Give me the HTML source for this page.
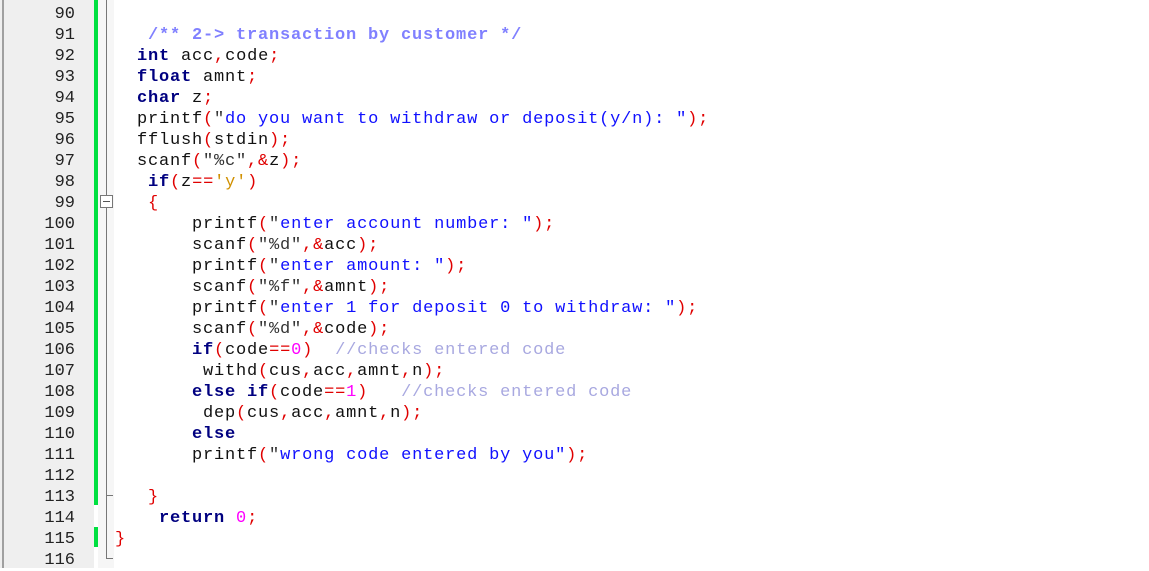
<!DOCTYPE html>
<html><head><meta charset="utf-8"><style>
html,body{margin:0;padding:0;width:1149px;height:568px;overflow:hidden;background:#fff;}
#gut{position:absolute;left:0;top:0;width:94px;height:568px;background:#efefef;}
#gb{position:absolute;left:2px;top:0;width:2px;height:568px;background:#a0a0a0;}
#fold{position:absolute;left:98px;top:0;width:16px;height:568px;background:#f6f6f6;}
.g{position:absolute;left:94px;width:4px;background:#00e040;}
#t{position:absolute;left:0;top:2px;width:1149px;height:568px;}
.num{position:absolute;left:0;width:75px;text-align:right;font:17px "Liberation Mono",monospace;letter-spacing:0px;color:#222;line-height:21px;}
.ln{position:absolute;left:115px;font:17px "Liberation Mono",monospace;letter-spacing:0.8px;line-height:21px;white-space:pre;color:#111;}
.k{color:#000080;font-weight:bold}
.p{color:#e00000}
.s{color:#1010ff}
.n{color:#ff00ff}
.c{color:#8080ff;font-weight:bold}
.cm{color:#a8a8e0}
.ch{color:#d09000}
.q{color:#333}
</style></head><body>
<div id="gut"></div><div id="gb"></div><div id="fold"></div>
<div class="g" style="top:0;height:505px"></div>
<div class="g" style="top:527px;height:20px"></div>
<div style="position:absolute;left:106px;top:0;width:1px;height:195px;background:#777"></div>
<div style="position:absolute;left:100px;top:195px;width:11px;height:11px;border:1px solid #777;background:#fff"></div>
<div style="position:absolute;left:103px;top:201px;width:7px;height:1px;background:#555"></div>
<div style="position:absolute;left:106px;top:208px;width:1px;height:350px;background:#777"></div>
<div style="position:absolute;left:106px;top:495px;width:7px;height:1px;background:#777"></div>
<div style="position:absolute;left:106px;top:558px;width:7px;height:1px;background:#777"></div>
<div id="t">
<div class="num" style="top:2px">90</div>
<div class="num" style="top:23px">91</div>
<div class="num" style="top:44px">92</div>
<div class="num" style="top:65px">93</div>
<div class="num" style="top:86px">94</div>
<div class="num" style="top:107px">95</div>
<div class="num" style="top:128px">96</div>
<div class="num" style="top:149px">97</div>
<div class="num" style="top:170px">98</div>
<div class="num" style="top:191px">99</div>
<div class="num" style="top:212px">100</div>
<div class="num" style="top:233px">101</div>
<div class="num" style="top:254px">102</div>
<div class="num" style="top:275px">103</div>
<div class="num" style="top:296px">104</div>
<div class="num" style="top:317px">105</div>
<div class="num" style="top:338px">106</div>
<div class="num" style="top:359px">107</div>
<div class="num" style="top:380px">108</div>
<div class="num" style="top:401px">109</div>
<div class="num" style="top:422px">110</div>
<div class="num" style="top:443px">111</div>
<div class="num" style="top:464px">112</div>
<div class="num" style="top:485px">113</div>
<div class="num" style="top:506px">114</div>
<div class="num" style="top:527px">115</div>
<div class="num" style="top:548px">116</div>

<div class="ln" style="top:23px">   <span class="c">/** 2-&gt; transaction by customer */</span></div>
<div class="ln" style="top:44px">  <span class="k">int</span> acc<span class="p">,</span>code<span class="p">;</span></div>
<div class="ln" style="top:65px">  <span class="k">float</span> amnt<span class="p">;</span></div>
<div class="ln" style="top:86px">  <span class="k">char</span> z<span class="p">;</span></div>
<div class="ln" style="top:107px">  printf<span class="p">(</span><span class="q">"</span><span class="s">do you want to withdraw or deposit(y/n): "</span><span class="p">);</span></div>
<div class="ln" style="top:128px">  fflush<span class="p">(</span>stdin<span class="p">);</span></div>
<div class="ln" style="top:149px">  scanf<span class="p">(</span><span class="q">"%c"</span><span class="p">,&amp;</span>z<span class="p">);</span></div>
<div class="ln" style="top:170px">   <span class="k">if</span><span class="p">(</span>z<span class="p">==</span><span class="ch">'y'</span><span class="p">)</span></div>
<div class="ln" style="top:191px">   <span class="p">{</span></div>
<div class="ln" style="top:212px">       printf<span class="p">(</span><span class="q">"</span><span class="s">enter account number: "</span><span class="p">);</span></div>
<div class="ln" style="top:233px">       scanf<span class="p">(</span><span class="q">"%d"</span><span class="p">,&amp;</span>acc<span class="p">);</span></div>
<div class="ln" style="top:254px">       printf<span class="p">(</span><span class="q">"</span><span class="s">enter amount: "</span><span class="p">);</span></div>
<div class="ln" style="top:275px">       scanf<span class="p">(</span><span class="q">"%f"</span><span class="p">,&amp;</span>amnt<span class="p">);</span></div>
<div class="ln" style="top:296px">       printf<span class="p">(</span><span class="q">"</span><span class="s">enter 1 for deposit 0 to withdraw: "</span><span class="p">);</span></div>
<div class="ln" style="top:317px">       scanf<span class="p">(</span><span class="q">"%d"</span><span class="p">,&amp;</span>code<span class="p">);</span></div>
<div class="ln" style="top:338px">       <span class="k">if</span><span class="p">(</span>code<span class="p">==</span><span class="n">0</span><span class="p">)</span>  <span class="cm">//checks entered code</span></div>
<div class="ln" style="top:359px">        withd<span class="p">(</span>cus<span class="p">,</span>acc<span class="p">,</span>amnt<span class="p">,</span>n<span class="p">);</span></div>
<div class="ln" style="top:380px">       <span class="k">else if</span><span class="p">(</span>code<span class="p">==</span><span class="n">1</span><span class="p">)</span>   <span class="cm">//checks entered code</span></div>
<div class="ln" style="top:401px">        dep<span class="p">(</span>cus<span class="p">,</span>acc<span class="p">,</span>amnt<span class="p">,</span>n<span class="p">);</span></div>
<div class="ln" style="top:422px">       <span class="k">else</span></div>
<div class="ln" style="top:443px">       printf<span class="p">(</span><span class="q">"</span><span class="s">wrong code entered by you"</span><span class="p">);</span></div>
<div class="ln" style="top:485px">   <span class="p">}</span></div>
<div class="ln" style="top:506px">    <span class="k">return</span> <span class="n">0</span><span class="p">;</span></div>
<div class="ln" style="top:527px"><span class="p">}</span></div>
</div>
</body></html>
